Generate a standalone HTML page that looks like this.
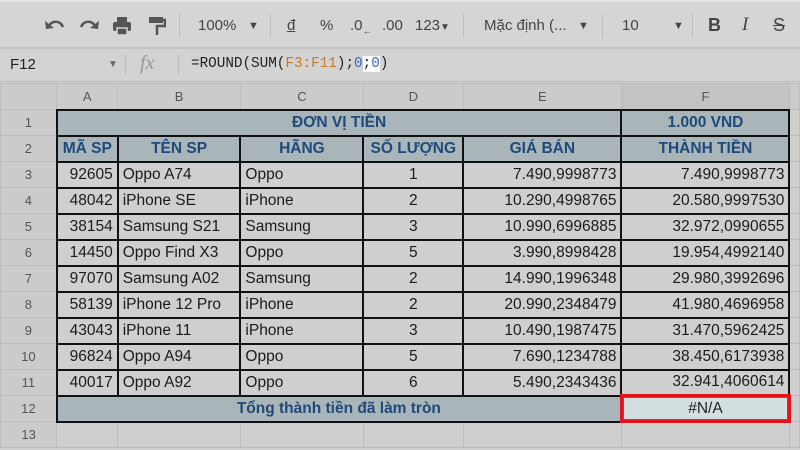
<!DOCTYPE html>
<html><head><meta charset="utf-8"><style>
*{margin:0;padding:0;box-sizing:border-box}
body{width:800px;height:450px;overflow:hidden;background:#cfcfcf;font-family:"Liberation Sans",Arial,sans-serif;position:relative}
#tb{position:absolute;left:0;top:0;width:800px;height:49px;background:#d5d5d5;border-top:2px solid #e2e2e2;border-bottom:2px solid #c4c4c4;color:#444;font-size:15px}
#tb span{position:absolute;top:15px}
.sep{position:absolute;top:12px;width:1px;height:24px;background:#bdbdbd}
#fb{position:absolute;left:0;top:49px;width:800px;height:33px;background:#d3d3d3;border-bottom:1px solid #bcbcbc;font-size:15px;color:#222}
table{position:absolute;left:0;top:83px;border-collapse:collapse;table-layout:fixed;font-size:15.5px;color:#1b1b1b}
td{border:1px solid #bcbcbc;height:26px;padding:0 4px;white-space:nowrap;overflow:hidden;background:#cfcfcf}
tr.h td{background:#cbcbcb;color:#555;text-align:center;font-size:13px}
td.rn{background:#cbcbcb;color:#555;text-align:center;font-size:13px}
td.d{border:2px solid #111}
td.hd{background:#a9b5b9;color:#1d4a7a;font-weight:bold;text-align:center;border:2px solid #111}
.r{text-align:right}.c{text-align:center}
</style></head><body>
<div id="tb">
<svg style="position:absolute;left:44px;top:15px" width="22" height="16" viewBox="0 0 22 16"><path d="M4 10 C8 3,16 3,19 10" fill="none" stroke="#555" stroke-width="2.6"/><path d="M1 4 L2 12 L10 11 Z" fill="#555"/></svg>
<svg style="position:absolute;left:78px;top:15px" width="22" height="16" viewBox="0 0 22 16"><path d="M18 10 C14 3,6 3,3 10" fill="none" stroke="#555" stroke-width="2.6"/><path d="M21 4 L20 12 L12 11 Z" fill="#555"/></svg>
<svg style="position:absolute;left:112px;top:14px" width="20" height="20" viewBox="0 0 20 20"><rect x="5" y="1" width="10" height="5" fill="#555"/><rect x="1" y="6" width="18" height="9" rx="2" fill="#555"/><rect x="5" y="12" width="10" height="7" fill="#555" stroke="#d5d5d5" stroke-width="1.5"/></svg>
<svg style="position:absolute;left:148px;top:14px" width="18" height="20" viewBox="0 0 18 20"><rect x="1" y="1" width="14" height="6" fill="#555"/><path d="M15 4 H17 V10 H9 V19" fill="none" stroke="#555" stroke-width="2.5"/></svg>
<div class="sep" style="left:179px"></div>
<span style="left:198px">100%</span><span style="left:248px;font-size:11px;top:18px">▼</span>
<div class="sep" style="left:270px"></div>
<span style="left:287px;text-decoration:underline">đ</span><span style="left:320px">%</span><span style="left:350px">.0<sub style="font-size:9px">←</sub></span><span style="left:382px">.00</span>
<span style="left:415px">123<small style="font-size:10px">▼</small></span>
<div class="sep" style="left:463px"></div>
<span style="left:484px">Mặc định (...</span><span style="left:578px;font-size:11px;top:18px">▼</span>
<div class="sep" style="left:602px"></div>
<span style="left:622px">10</span><span style="left:673px;font-size:11px;top:18px">▼</span>
<div class="sep" style="left:692px"></div>
<span style="left:708px;font-weight:bold;font-size:18px;top:13px">B</span><span style="left:742px;font-style:italic;font-family:'Liberation Serif';font-size:19px;top:12px">I</span><span style="left:773px;text-decoration:line-through;font-size:18px;top:13px">S</span>
</div>
<div id="fb">
<span style="position:absolute;left:10px;top:7px">F12</span>
<span style="position:absolute;left:108px;top:10px;font-size:10px;color:#666">▼</span>
<div style="position:absolute;left:125px;top:6px;width:1px;height:20px;background:#bbb"></div>
<span style="position:absolute;left:140px;top:3px;font-family:'Liberation Serif';font-style:italic;font-size:20px;color:#999">fx</span>
<div style="position:absolute;left:178px;top:6px;width:1px;height:20px;background:#bbb"></div>
<span style="position:absolute;left:191px;top:7px;font-family:'Liberation Mono',monospace;font-size:14.3px">=ROUND(SUM(<span style="color:#c27b2a">F3:F11</span>);<span style="color:#3a66c4">0</span><span style="background:#fff">;<span style="color:#3a66c4">0</span></span>)</span>
</div>
<table>
<colgroup><col style="width:57px"><col style="width:61px"><col style="width:123px"><col style="width:124px"><col style="width:100px"><col style="width:159px"><col style="width:169px"><col style="width:8px"></colgroup>
<tr class="h"><td></td><td>A</td><td>B</td><td>C</td><td>D</td><td>E</td><td style="background:#c3c3c3">F</td><td></td></tr>
<tr><td class="rn">1</td><td class="hd" colspan="5">ĐƠN VỊ TIỀN</td><td class="hd">1.000 VND</td><td></td></tr>
<tr><td class="rn">2</td><td class="hd">MÃ SP</td><td class="hd">TÊN SP</td><td class="hd">HÃNG</td><td class="hd">SỐ LƯỢNG</td><td class="hd">GIÁ BÁN</td><td class="hd">THÀNH TIỀN</td><td></td></tr>
<tr><td class="rn">3</td><td class="d r">92605</td><td class="d">Oppo A74</td><td class="d">Oppo</td><td class="d c">1</td><td class="d r">7.490,9998773</td><td class="d r">7.490,9998773</td><td></td></tr>
<tr><td class="rn">4</td><td class="d r">48042</td><td class="d">iPhone SE</td><td class="d">iPhone</td><td class="d c">2</td><td class="d r">10.290,4998765</td><td class="d r">20.580,9997530</td><td></td></tr>
<tr><td class="rn">5</td><td class="d r">38154</td><td class="d">Samsung S21</td><td class="d">Samsung</td><td class="d c">3</td><td class="d r">10.990,6996885</td><td class="d r">32.972,0990655</td><td></td></tr>
<tr><td class="rn">6</td><td class="d r">14450</td><td class="d">Oppo Find X3</td><td class="d">Oppo</td><td class="d c">5</td><td class="d r">3.990,8998428</td><td class="d r">19.954,4992140</td><td></td></tr>
<tr><td class="rn">7</td><td class="d r">97070</td><td class="d">Samsung A02</td><td class="d">Samsung</td><td class="d c">2</td><td class="d r">14.990,1996348</td><td class="d r">29.980,3992696</td><td></td></tr>
<tr><td class="rn">8</td><td class="d r">58139</td><td class="d">iPhone 12 Pro</td><td class="d">iPhone</td><td class="d c">2</td><td class="d r">20.990,2348479</td><td class="d r">41.980,4696958</td><td></td></tr>
<tr><td class="rn">9</td><td class="d r">43043</td><td class="d">iPhone 11</td><td class="d">iPhone</td><td class="d c">3</td><td class="d r">10.490,1987475</td><td class="d r">31.470,5962425</td><td></td></tr>
<tr><td class="rn">10</td><td class="d r">96824</td><td class="d">Oppo A94</td><td class="d">Oppo</td><td class="d c">5</td><td class="d r">7.690,1234788</td><td class="d r">38.450,6173938</td><td></td></tr>
<tr><td class="rn">11</td><td class="d r">40017</td><td class="d">Oppo A92</td><td class="d">Oppo</td><td class="d c">6</td><td class="d r">5.490,2343436</td><td class="d r">32.941,4060614</td><td></td></tr>
<tr><td class="rn">12</td><td class="hd" colspan="5">Tổng thành tiền đã làm tròn</td><td class="c" style="background:#d4dfe2;border:3px solid #e0141a;box-shadow:inset 0 0 0 1px #2a6ad8;color:#222">#N/A</td><td></td></tr>
<tr><td class="rn">13</td><td></td><td></td><td></td><td></td><td></td><td></td><td></td></tr>
</table>
</body></html>
